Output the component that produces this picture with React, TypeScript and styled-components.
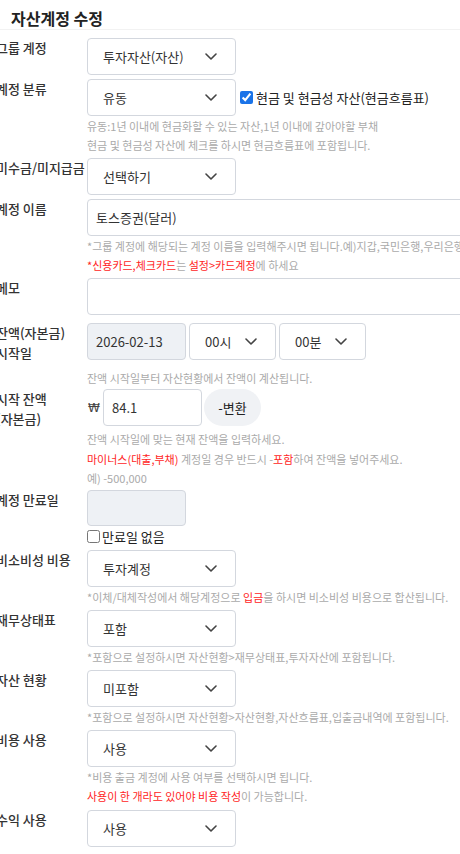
import React from 'react'
import styled, { createGlobalStyle } from 'styled-components'

const GlobalStyle = createGlobalStyle`
  * { box-sizing: border-box; }
  body {
    margin: 0;
    background: #ffffff;
    overflow-x: hidden;
    font-family: "Noto Sans CJK KR", "Noto Sans", sans-serif;
    color: #333333;
  }
`

const WON = '\u20A9'

const Chevron: React.FC = () => (
  <svg width="12" height="7" viewBox="0 0 12 7" fill="none">
    <polyline points="1,1 6,6 11,1" stroke="#444" strokeWidth="1.6" strokeLinecap="round" strokeLinejoin="round" />
  </svg>
)

interface SelectProps {
  value: string,
  width?: number,
}

const Select: React.FC<SelectProps> = ({ value, width = 149 }) => (
  <StyledSelect $width={width}>
    <span>{value}</span>
    <Chevron />
  </StyledSelect>
)

const App: React.FC = () => {
  return (
    <StyledPage>
      <GlobalStyle />
      <StyledHeader>
        <StyledTitle>자산계정 수정</StyledTitle>
      </StyledHeader>
      <StyledForm>
        <StyledRow>
          <StyledLabel>그룹 계정</StyledLabel>
          <div>
            <Select value="투자자산(자산)" />
          </div>
        </StyledRow>

        <StyledRow $gap={3}>
          <StyledLabel>계정 분류</StyledLabel>
          <div>
            <StyledInline>
              <Select value="유동" />
              <StyledCheck>
                <input type="checkbox" defaultChecked />
                현금 및 현금성 자산(현금흐름표)
              </StyledCheck>
            </StyledInline>
            <StyledHelp>유동:1년 이내에 현금화할 수 있는 자산,1년 이내에 갚아야할 부채</StyledHelp>
            <StyledHelp $top={0}>현금 및 현금성 자산에 체크를 하시면 현금흐름표에 포함됩니다.</StyledHelp>
          </div>
        </StyledRow>

        <StyledRow>
          <StyledLabel>미수금/미지급금</StyledLabel>
          <div>
            <Select value="선택하기" />
          </div>
        </StyledRow>

        <StyledRow $gap={3}>
          <StyledLabel>계정 이름</StyledLabel>
          <div>
            <StyledInput $width={400} defaultValue="토스증권(달러)" />
            <StyledHelp>*그룹 계정에 해당되는 계정 이름을 입력해주시면 됩니다.예)지갑,국민은행,우리은행,신한은행</StyledHelp>
            <StyledHelp $top={0}>
              <StyledRed>*신용카드,체크카드</StyledRed>는 <StyledRed>설정&gt;카드계정</StyledRed>에 하세요
            </StyledHelp>
          </div>
        </StyledRow>

        <StyledRow $gap={8}>
          <StyledLabel>메모</StyledLabel>
          <div>
            <StyledInput $width={400} />
          </div>
        </StyledRow>

        <StyledRow $gap={1}>
          <StyledLabel>잔액(자본금) 시작일</StyledLabel>
          <div>
            <StyledInline $gap={3}>
              <StyledInput $width={99} $disabled defaultValue="2026-02-13" readOnly />
              <Select value="00시" width={87} />
              <Select value="00분" width={87} />
            </StyledInline>
            <StyledHelp $top={9}>잔액 시작일부터 자산현황에서 잔액이 계산됩니다.</StyledHelp>
          </div>
        </StyledRow>

        <StyledRow $gap={1}>
          <StyledLabel>시작 잔액(자본금)</StyledLabel>
          <div>
            <StyledAmount>
              <StyledCurrency>{WON}</StyledCurrency>
              <StyledInput $width={99} defaultValue="84.1" />
              <StyledConvert type="button">-변환</StyledConvert>
            </StyledAmount>
            <StyledHelp $top={4} $line={19.5}>잔액 시작일에 맞는 현재 잔액을 입력하세요.</StyledHelp>
            <StyledHelp $top={0} $line={19.5}>
              <StyledRed>마이너스(대출,부채)</StyledRed> 계정일 경우 반드시 -<StyledRed>포함</StyledRed>하여 잔액을 넣어주세요.
            </StyledHelp>
            <StyledHelp $top={0} $line={19.5}>예) -500,000</StyledHelp>
          </div>
        </StyledRow>

        <StyledRow $gap={3}>
          <StyledLabel>계정 만료일</StyledLabel>
          <div>
            <StyledInput $width={99} $height={36} $disabled readOnly />
            <StyledExpire>
              <input type="checkbox" />
              만료일 없음
            </StyledExpire>
          </div>
        </StyledRow>

        <StyledRow $gap={3}>
          <StyledLabel>비소비성 비용</StyledLabel>
          <div>
            <Select value="투자계정" />
            <StyledHelp>
              *이체/대체작성에서 해당계정으로 <StyledRed>입금</StyledRed>을 하시면 비소비성 비용으로 합산됩니다.
            </StyledHelp>
          </div>
        </StyledRow>

        <StyledRow $gap={3}>
          <StyledLabel>재무상태표</StyledLabel>
          <div>
            <Select value="포함" />
            <StyledHelp>*포함으로 설정하시면 자산현황&gt;재무상태표,투자자산에 포함됩니다.</StyledHelp>
          </div>
        </StyledRow>

        <StyledRow $gap={3}>
          <StyledLabel>자산 현황</StyledLabel>
          <div>
            <Select value="미포함" />
            <StyledHelp>*포함으로 설정하시면 자산현황&gt;자산현황,자산흐름표,입출금내역에 포함됩니다.</StyledHelp>
          </div>
        </StyledRow>

        <StyledRow $gap={4}>
          <StyledLabel>비용 사용</StyledLabel>
          <div>
            <Select value="사용" />
            <StyledHelp>*비용 출금 계정에 사용 여부를 선택하시면 됩니다.</StyledHelp>
            <StyledHelp $top={0}>
              <StyledRed>사용이 한 개라도 있어야 비용 작성</StyledRed>이 가능합니다.
            </StyledHelp>
          </div>
        </StyledRow>

        <StyledRow>
          <StyledLabel>수익 사용</StyledLabel>
          <div>
            <Select value="사용" />
          </div>
        </StyledRow>
      </StyledForm>
    </StyledPage>
  )
}

const StyledPage = styled.div`
  width: 460px;
  overflow: hidden;
`

const StyledHeader = styled.div`
  height: 30px;
  padding: 8px 0 0 11px;
  border-bottom: 1px solid #f2f2f2;
`

const StyledTitle = styled.h1`
  margin: 0;
  font-size: 16px;
  line-height: 20px;
  font-weight: 700;
  color: #222222;
`

const StyledForm = styled.div`
  display: flex;
  flex-direction: column;
  margin-left: -4px;
  padding-top: 8px;
`

const StyledRow = styled.div<{ $gap?: number }>`
  display: grid;
  grid-template-columns: 91px minmax(0, 1fr);
  margin-bottom: ${props => props.$gap ?? 4}px;
`

const StyledLabel = styled.div`
  font-size: 13px;
  line-height: 20px;
  font-weight: 500;
  color: #333333;
  word-break: keep-all;
`

const StyledInline = styled.div<{ $gap?: number }>`
  display: flex;
  align-items: center;
  gap: ${props => props.$gap ?? 0}px;
`

const StyledAmount = styled.div`
  display: grid;
  grid-template-columns: 16px 99px 59px;
  align-items: center;
  width: 174px;
`

const StyledSelect = styled.div<{ $width: number }>`
  display: flex;
  align-items: center;
  justify-content: space-between;
  flex: none;
  width: ${props => props.$width}px;
  height: 37px;
  padding: 0 18px 0 15px;
  border: 1px solid #d3d7de;
  border-radius: 4px;
  background: #ffffff;
  font-size: 13px;
  color: #333333;
`

const StyledInput = styled.input<{ $width: number, $height?: number, $disabled?: boolean }>`
  display: block;
  flex: none;
  width: ${props => props.$width}px;
  height: ${props => props.$height ?? 37}px;
  padding: 0 8px;
  border: 1px solid #d3d7de;
  border-radius: 4px;
  background: ${props => props.$disabled ? '#eef1f5' : '#ffffff'};
  font-family: inherit;
  font-size: 13px;
  color: #333333;
  outline: none;
`

const StyledCheck = styled.label`
  display: flex;
  align-items: center;
  font-size: 13px;
  color: #222222;
  white-space: nowrap;

  input {
    width: 13px;
    height: 13px;
    margin: 0 3px 0 4px;
    accent-color: #1a73e8;
  }
`

const StyledExpire = styled.label`
  display: flex;
  align-items: center;
  height: 20px;
  margin-top: 1px;
  font-size: 13px;
  color: #222222;

  input {
    width: 13px;
    height: 13px;
    margin: 0 2px 0 0;
  }
`

const StyledHelp = styled.div<{ $top?: number, $line?: number }>`
  margin-top: ${props => props.$top ?? 1}px;
  font-size: 11px;
  line-height: ${props => props.$line ?? 19}px;
  color: #aaaaaa;
  white-space: nowrap;
`

const StyledRed = styled.span`
  color: #ff2424;
`

const StyledCurrency = styled.div`
  overflow: hidden;
  padding-left: 1px;
  font-family: "DejaVu Sans", "Liberation Sans", sans-serif;
  font-size: 12px;
  color: #444444;
`

const StyledConvert = styled.button`
  width: 57px;
  height: 37px;
  margin-left: 2px;
  border: none;
  border-radius: 19px;
  background: #f0f2f5;
  font-family: inherit;
  font-size: 13px;
  color: #222222;
  padding: 0;
`

export default App
